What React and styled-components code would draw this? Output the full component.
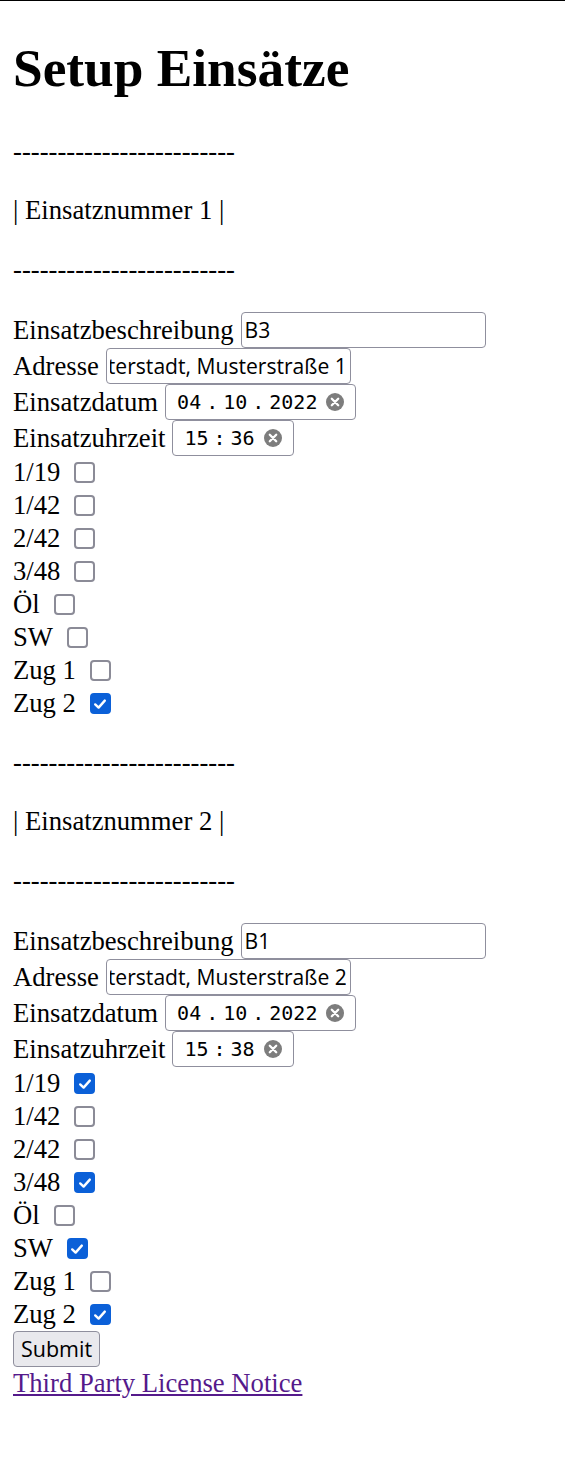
import React, { useEffect, useRef } from "react";
import styled, { createGlobalStyle } from "styled-components";

const Global = createGlobalStyle`
  html, body { margin: 0; padding: 0; background: #fff; }
  body { font-family: "Liberation Serif", "Times New Roman", serif; color: #000; }
`;

const Page = styled.div`
  border-top: 1px solid #000;
  padding: 0 13px 60px 13px;
  font-size: 26.67px;
`;

const Title = styled.h1`
  margin: 36.5px 0 36px 0;
  font-size: 53.33px;
  font-weight: bold;
  line-height: 61px;
`;

const Line = styled.p`
  margin: 26px 0;
  line-height: 33px;
  white-space: pre;
`;

const FieldRow = styled.div`
  display: flex;
  align-items: center;
  height: 36px;
  line-height: 36px;
`;

const Label = styled.span`
  margin-right: 7px;
  white-space: nowrap;
`;

const TextInput = styled.input`
  box-sizing: border-box;
  width: 245px;
  height: 36px;
  margin: 0;
  border: 1px solid #8f8f9d;
  border-radius: 4px;
  padding: 0 3.5px 0 3px;
  background: #fff;
  color: #000;
  font-family: "Open Sans", "Noto Sans", sans-serif;
  font-size: 21.1px;
  outline: none;
`;

const PickerBox = styled.div`
  box-sizing: border-box;
  height: 36px;
  border: 1px solid #8f8f9d;
  border-radius: 4px;
  display: flex;
  align-items: center;
  padding: 0 11px 0 11px;
  font-family: "DejaVu Sans Mono", "Liberation Mono", monospace;
  font-size: 20px;
  line-height: 1;
`;

const Seg = styled.span`
  white-space: nowrap;
`;

const Sep = styled.span`
  display: inline-block;
  width: 22px;
  text-align: center;
`;

const ClearIcon = styled.svg`
  width: 18px;
  height: 18px;
  margin-left: 9px;
  flex: none;
`;

const CheckRow = styled.div`
  display: flex;
  align-items: center;
  height: 33px;
  line-height: 33px;
`;

const Box = styled.span`
  box-sizing: border-box;
  width: 21px;
  height: 21px;
  margin: 1px 0 0 14px;
  border-radius: 4px;
  border: 2.6px solid ${(p) => (p.$checked ? "#0b60d8" : "#8b8b97")};
  background: ${(p) => (p.$checked ? "#0b60d8" : "#fff")};
  display: inline-flex;
  align-items: center;
  justify-content: center;
`;

const SubmitButton = styled.button`
  box-sizing: border-box;
  display: block;
  width: 87px;
  height: 36px;
  padding: 0;
  border: 1px solid #8f8f9d;
  border-radius: 4px;
  background: #e9e9ed;
  font-family: "Open Sans", "Noto Sans", sans-serif;
  font-size: 21.5px;
  color: #000;
`;

const LicenseLink = styled.a`
  display: inline-block;
  line-height: 33px;
  color: #551a8b;
  text-decoration: underline;
  text-underline-offset: 2px;
`;

function Clear() {
  return (
    <ClearIcon viewBox="0 0 18 18">
      <circle cx="9" cy="9" r="9" fill="#7d7d7d" />
      <path d="M5.8 5.8 L12.2 12.2 M12.2 5.8 L5.8 12.2" stroke="#fff" strokeWidth="2.3" strokeLinecap="round" />
    </ClearIcon>
  );
}

function EndInput({ value }) {
  const ref = useRef(null);
  useEffect(() => {
    if (ref.current) ref.current.scrollLeft = ref.current.scrollWidth;
  }, [value]);
  return <TextInput ref={ref} readOnly value={value} />;
}

function Check({ label, checked }) {
  return (
    <CheckRow>
      <span>{label}</span>
      <Box $checked={checked}>
        {checked && (
          <svg width="14" height="14" viewBox="0 0 14 14">
            <path d="M2.2 7.4 L5.6 10.6 L11.8 3.6" fill="none" stroke="#fff" strokeWidth="2.4" strokeLinecap="round" strokeLinejoin="round" />
          </svg>
        )}
      </Box>
    </CheckRow>
  );
}

const DASHES = "-------------------------";
const UNITS = ["1/19", "1/42", "2/42", "3/48", "Öl", "SW", "Zug 1", "Zug 2"];

const missions = [
  { nr: 1, desc: "B3", addr: "Musterstadt, Musterstraße 1", date: ["04", "10", "2022"], time: ["15", "36"], checked: ["Zug 2"] },
  { nr: 2, desc: "B1", addr: "Musterstadt, Musterstraße 2", date: ["04", "10", "2022"], time: ["15", "38"], checked: ["1/19", "3/48", "SW", "Zug 2"] },
];

function Mission({ m }) {
  return (
    <section>
      <Line>{DASHES}</Line>
      <Line>| Einsatznummer {m.nr} |</Line>
      <Line>{DASHES}</Line>
      <FieldRow>
        <Label>Einsatzbeschreibung</Label>
        <TextInput readOnly value={m.desc} />
      </FieldRow>
      <FieldRow>
        <Label>Adresse</Label>
        <EndInput value={m.addr} />
      </FieldRow>
      <FieldRow>
        <Label>Einsatzdatum</Label>
        <PickerBox>
          <Seg>{m.date[0]}</Seg>
          <Sep>.</Sep>
          <Seg>{m.date[1]}</Seg>
          <Sep>.</Sep>
          <Seg>{m.date[2]}</Seg>
          <Clear />
        </PickerBox>
      </FieldRow>
      <FieldRow>
        <Label>Einsatzuhrzeit</Label>
        <PickerBox>
          <Seg>{m.time[0]}</Seg>
          <Sep>:</Sep>
          <Seg>{m.time[1]}</Seg>
          <Clear />
        </PickerBox>
      </FieldRow>
      {UNITS.map((u) => (
        <Check key={u} label={u} checked={m.checked.includes(u)} />
      ))}
    </section>
  );
}

export default function App() {
  return (
    <>
      <Global />
      <Page>
        <Title>Setup Einsätze</Title>
        {missions.map((m) => (
          <Mission key={m.nr} m={m} />
        ))}
        <SubmitButton type="button">Submit</SubmitButton>
        <LicenseLink href="#">Third Party License Notice</LicenseLink>
      </Page>
    </>
  );
}
